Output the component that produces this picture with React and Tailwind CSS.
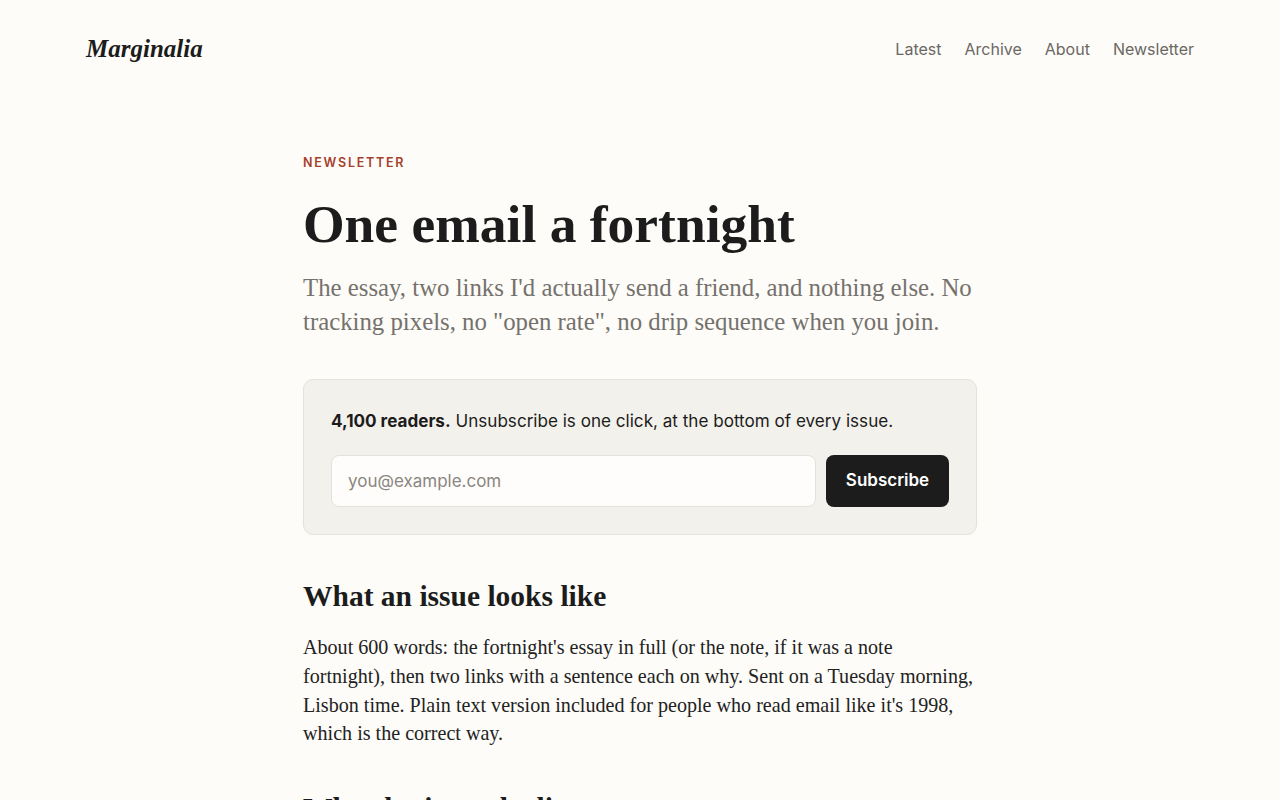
import React from "react";

export default function App() {
  return (
    <div className="min-h-screen bg-[#fdfcf8] text-[#1c1c1c] font-['Inter',sans-serif]">
      <header className="flex items-center justify-between px-[86px] pt-[30px] pb-[30px]">
        <a className="text-[25px] italic font-bold text-[#1c1c1c] font-['Liberation_Serif',serif]">
          Marginalia
        </a>
        <nav className="flex items-center gap-[23px] text-[16px] text-[#6b6864]">
          <a>Latest</a>
          <a>Archive</a>
          <a>About</a>
          <a>Newsletter</a>
        </nav>
      </header>

      <main className="mx-auto max-w-[674px] pt-[56px] pb-20">
        <div className="text-[12.5px] font-semibold tracking-[0.14em] text-[#a5412c] uppercase">
          Newsletter
        </div>
        <h1 className="mt-[23px] text-[53.5px] leading-[1.1] font-semibold text-[#1c1c1c] font-['Liberation_Serif',serif]">
          One email a fortnight
        </h1>
        <p className="mt-[17px] text-[24.8px] leading-[34px] text-[#75716c] font-['Liberation_Serif',serif]">
          The essay, two links I'd actually send a friend, and nothing else. No tracking pixels, no "open rate", no drip sequence when you join.
        </p>

        <section className="mt-[40px] rounded-[10px] border border-[#e6e2d9] bg-[#f3f1eb] px-[27px] pt-[28px] pb-[27px]">
          <p className="text-[17.1px] leading-[26px] text-[#1c1c1c]">
            <span className="font-bold">4,100 readers.</span> Unsubscribe is one click, at the bottom of every issue.
          </p>
          <div className="mt-[21px] flex gap-[10px]">
            <input
              type="email"
              placeholder="you@example.com"
              className="h-[52px] flex-1 rounded-[8px] border border-[#e6e2d9] bg-[#fefdfb] px-[16px] text-[17px] text-[#1c1c1c] placeholder:text-[#8a8680] outline-none"
            />
            <button className="h-[52px] w-[123px] rounded-[8px] bg-[#1c1c1c] text-[17px] font-semibold text-white">
              Subscribe
            </button>
          </div>
        </section>

        <h2 className="mt-[43px] text-[29.5px] leading-[36px] font-semibold text-[#1c1c1c] font-['Liberation_Serif',serif]">
          What an issue looks like
        </h2>
        <p className="mt-[19px] text-[20.1px] leading-[28.7px] text-[#222] font-['Liberation_Serif',serif]">
          About 600 words: the fortnight's essay in full (or the note, if it was a note fortnight), then two links with a sentence each on why. Sent on a Tuesday morning, Lisbon time. Plain text version included for people who read email like it's 1998, which is the correct way.
        </p>

        <h2 className="mt-[42px] text-[29.5px] leading-[36px] font-semibold text-[#1c1c1c] font-['Liberation_Serif',serif]">
          Who else is on the list
        </h2>
        <p className="mt-[19px] text-[20.1px] leading-[28.7px] text-[#222] font-['Liberation_Serif',serif]">
          Mostly people who found an essay through a friend and wanted the next one without checking back.
        </p>
      </main>
    </div>
  );
}
